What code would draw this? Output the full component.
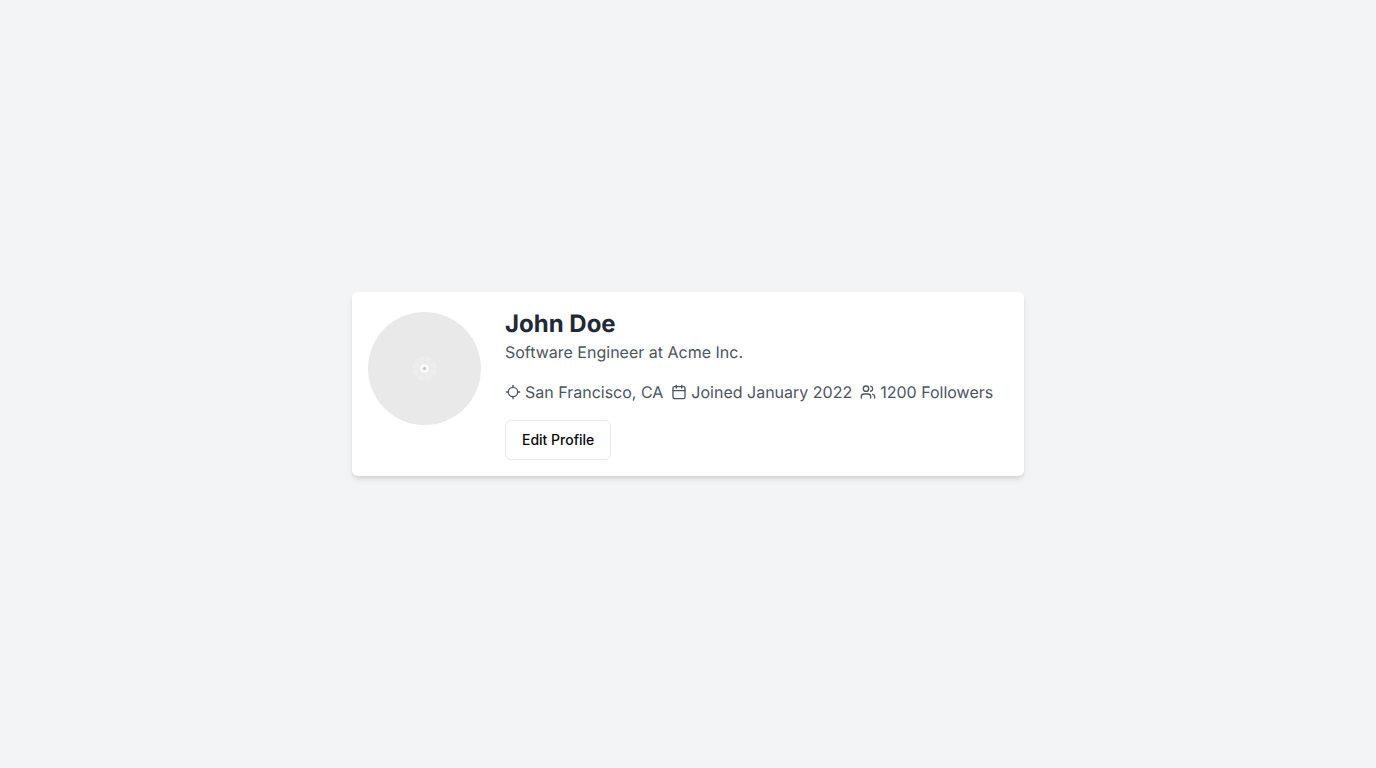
<main class="page">
  <article class="card">
    <svg class="avatar" viewBox="0 0 113 113" role="img" aria-label="John Doe">
      <circle cx="56.5" cy="56.5" r="56.5" fill="#e9e9e9" />
      <circle cx="56.5" cy="56.5" r="9.5" fill="none" stroke="#ededed" stroke-width="6" stroke-dasharray="6.5 1" />
      <circle cx="56.5" cy="56.5" r="5" fill="#f3f3f3" />
      <circle cx="56.5" cy="56.5" r="4" fill="#fbfbfb" />
      <circle cx="56.5" cy="56.5" r="1.7" fill="#c6c6c6" />
    </svg>
    <div class="info">
      <h1>John Doe</h1>
      <p class="role">Software Engineer at Acme Inc.</p>
      <ul class="facts">
        <li>
          <svg class="icon" viewBox="0 0 24 24" aria-hidden="true">
            <line x1="2" x2="5" y1="12" y2="12" /><line x1="19" x2="22" y1="12" y2="12" />
            <line x1="12" x2="12" y1="2" y2="5" /><line x1="12" x2="12" y1="19" y2="22" />
            <circle cx="12" cy="12" r="7" />
          </svg>
          <span>San Francisco, CA</span>
        </li>
        <li>
          <svg class="icon" viewBox="0 0 24 24" aria-hidden="true">
            <rect width="18" height="18" x="3" y="4" rx="2" ry="2" />
            <line x1="16" x2="16" y1="2" y2="6" /><line x1="8" x2="8" y1="2" y2="6" />
            <line x1="3" x2="21" y1="10" y2="10" />
          </svg>
          <span>Joined January 2022</span>
        </li>
        <li>
          <svg class="icon" viewBox="0 0 24 24" aria-hidden="true">
            <path d="M16 21v-2a4 4 0 0 0-4-4H6a4 4 0 0 0-4 4v2" />
            <circle cx="9" cy="7" r="4" />
            <path d="M22 21v-2a4 4 0 0 0-3-3.87" />
            <path d="M16 3.13a4 4 0 0 1 0 7.75" />
          </svg>
          <span>1200 Followers</span>
        </li>
      </ul>
      <button type="button">Edit Profile</button>
    </div>
  </article>
</main>

<style>
  :global(body) {
    background: #f3f4f6;
  }
  .page {
    min-height: 100vh;
    display: flex;
    align-items: center;
    justify-content: center;
    font-family: Inter, sans-serif;
    font-size: 16px;
    line-height: 24px;
    color: #4b5563;
    text-rendering: geometricPrecision;
  }
  .card {
    box-sizing: border-box;
    width: 100%;
    max-width: 672px;
    display: flex;
    align-items: flex-start;
    gap: 24px;
    padding: 16px;
    background: #fff;
    border-radius: 6px;
    box-shadow: 0 4px 6px -1px rgb(0 0 0 / 0.1), 0 2px 4px -2px rgb(0 0 0 / 0.1);
  }
  .avatar {
    flex: none;
    width: 113px;
    height: 113px;
    margin-top: 4px;
  }
  .info {
    min-width: 0;
  }
  h1 {
    margin: 0;
    font-size: 24px;
    line-height: 32px;
    font-weight: 700;
    color: #1f2937;
  }
  .role {
    margin: 0;
  }
  .facts {
    display: flex;
    flex-wrap: wrap;
    gap: 8px;
    margin: 16px 0 0;
    padding: 0;
    list-style: none;
  }
  li {
    display: flex;
    align-items: center;
    gap: 4px;
  }
  .icon {
    flex: none;
    width: 16px;
    height: 16px;
    fill: none;
    stroke: currentColor;
    stroke-width: 2;
    stroke-linecap: round;
    stroke-linejoin: round;
  }
  button {
    display: block;
    height: 40px;
    margin-top: 16px;
    padding: 0 16px;
    border: 1px solid #e5e7eb;
    border-radius: 6px;
    background: #fff;
    color: #09090b;
    font: 500 14px/20px Inter, sans-serif;
    cursor: pointer;
  }
</style>
